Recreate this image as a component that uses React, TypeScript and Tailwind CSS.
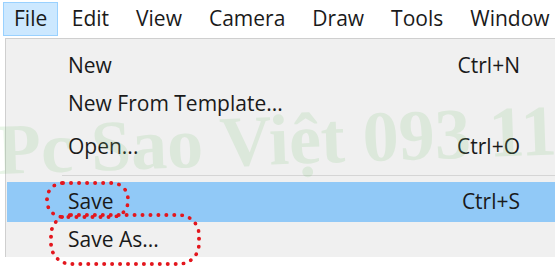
// App.tsx
// File menu opened, with "Save" hovered and two hand-drawn red markers.

const menus = ['File', 'Edit', 'View', 'Camera', 'Draw', 'Tools', 'Window'];

function MenuBar() {
  return (
    <div className="flex h-[38px] items-center bg-white pl-[3px] text-[21px] text-[#1a1a1a]">
      {menus.map((m, i) => (
        <div
          key={m}
          className={
            i === 0
              ? 'flex h-[34px] items-center border border-[#99d1ff] bg-[#cce8ff] px-[10px]'
              : 'flex h-[34px] items-center px-[13.5px]'
          }
        >
          {m}
        </div>
      ))}
    </div>
  );
}

function Item({ label, shortcut, className }: { label: string; shortcut?: string; className: string }) {
  return (
    <div className={`flex items-center pl-[61px] pr-[35px] ${className}`}>
      <span className="flex-1">{label}</span>
      {shortcut && <span>{shortcut}</span>}
    </div>
  );
}

export default function App() {
  return (
    <div
      className="relative h-[269px] w-[555px] overflow-hidden bg-white"
      style={{ fontFamily: '"Open Sans", "Noto Sans", sans-serif' }}
    >
      <MenuBar />
      <div className="ml-[5px] h-[219px] overflow-hidden border-l border-t border-[#cfcfcf] bg-[#f0f0f0] pl-px pt-[8px] text-[21px] text-[#1a1a1a]">
        <Item label="New" shortcut="Ctrl+N" className="h-[38px]" />
        <Item label="New From Template..." className="h-[38px]" />
        <Item label="Open..." shortcut="Ctrl+O" className="h-[47px]" />
        <div className="mb-[6px] mt-[5px] ml-[55px] h-px bg-[#d5d5d5]" />
        <Item label="Save" shortcut="Ctrl+S" className="h-[40px] bg-[#91c9f7]" />
        <Item label="Save As..." className="h-[36px]" />
      </div>

      {/* watermark */}
      <div
        className="pointer-events-none absolute left-[-3px] top-[114px] origin-left -rotate-[2deg] whitespace-nowrap text-[72px] font-bold leading-none text-[#7cc576] opacity-[0.17]"
        style={{ fontFamily: '"Liberation Serif", serif' }}
      >
        Pc Sao Việt 093 11
      </div>

      {/* red markers */}
      <div className="pointer-events-none absolute left-[45px] top-[181px] h-[38px] w-[85px] rounded-[18px] border-[4px] border-dotted border-[#e3161d]" />
      <div className="pointer-events-none absolute left-[49px] top-[213px] h-[53px] w-[152px] rounded-[22px] border-[4px] border-dotted border-[#e3161d]" />
    </div>
  );
}
